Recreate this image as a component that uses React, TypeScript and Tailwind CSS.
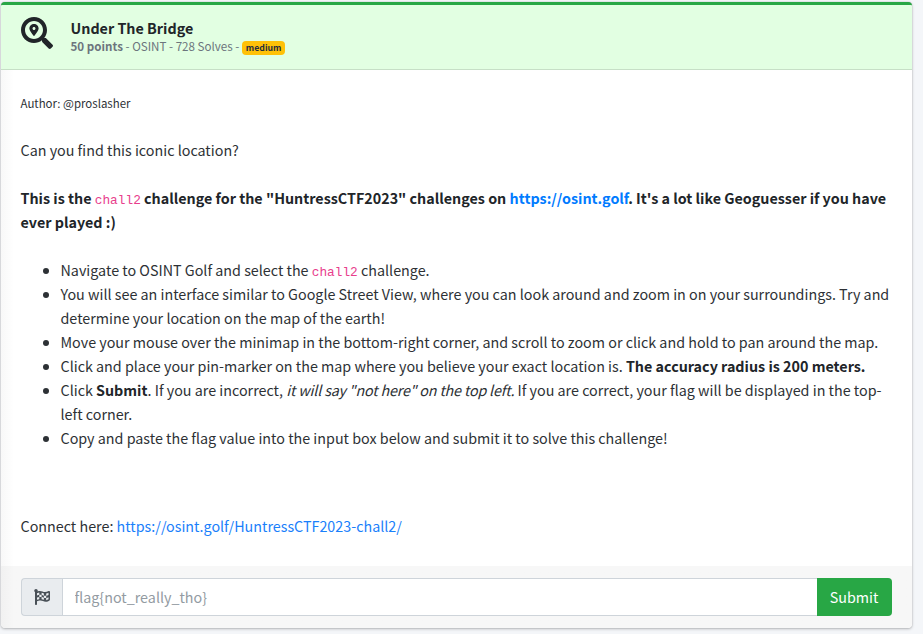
import React from "react";
import { FaSearchLocation, FaFlagCheckered } from "react-icons/fa";

function Code({ children }: { children: React.ReactNode }) {
  return (
    <code className="font-['Liberation_Mono',monospace] text-[12.8px] font-normal leading-none text-[#e83e8c]">
      {children}
    </code>
  );
}

function Line({ children }: { children: React.ReactNode }) {
  return <span className="block whitespace-nowrap">{children}</span>;
}

export default function App() {
  return (
    <div className="h-[634px] w-[923px] overflow-hidden bg-[#f4f6f9] pt-[2px] pl-px font-['Noto_Sans_CJK_SC','Source_Sans_Pro',sans-serif] text-[14.32px] leading-6 text-[#212529]">
      <div className="flex h-[626px] w-[911px] flex-col overflow-hidden rounded border-t-[3px] border-[#28a745] bg-white shadow-[0_0_1px_rgba(0,0,0,0.35),0_1px_3px_rgba(0,0,0,0.25)]">
        <header className="flex h-[65px] shrink-0 border-b border-[#c6dfc6] bg-[#e2ffe2] pl-[19.5px]">
          <FaSearchLocation className="mt-3 size-8 shrink-0" />
          <div className="ml-[18px] pt-[13px]">
            <h3 className="text-[14.32px] leading-5 font-bold">Under The Bridge</h3>
            <div className="flex h-4 items-center text-[11.6px] leading-4 whitespace-pre text-[#6c757d]">
              <b>50 points</b>
              <span> - OSINT - 728 Solves - </span>
              <span className="mt-[3px] flex h-[14px] items-center rounded bg-[#ffc107] px-1 text-[8.7px] font-bold text-[#1f2d3d]">
                medium
              </span>
            </div>
          </div>
        </header>
        <main className="h-[496px] shrink-0 bg-linear-to-r from-[#f8f8f8] to-white to-[13px] pr-5 pl-[19.5px] pt-[21px] text-[#2d3135]">
          <p className="text-[11.46px]">Author: @proslasher</p>
          <p className="mt-[23px]">Can you find this iconic location?</p>
          <p className="mt-6 font-bold text-[#212529]">
            <Line>
              This is the <Code>chall2</Code> challenge for the "HuntressCTF2023" challenges on{" "}
              <a className="text-[#007bff]">https://osint.golf</a>. It's a lot like Geoguesser if you have
            </Line>
            <Line>ever played :)</Line>
          </p>
          <ul className="mt-6 list-disc pl-10">
            <li>
              <Line>Navigate to OSINT Golf and select the <Code>chall2</Code> challenge.</Line>
            </li>
            <li>
              <Line>You will see an interface similar to Google Street View, where you can look around and zoom in on your surroundings. Try and</Line>
              <Line>determine your location on the map of the earth!</Line>
            </li>
            <li>
              <Line>Move your mouse over the minimap in the bottom-right corner, and scroll to zoom or click and hold to pan around the map.</Line>
            </li>
            <li>
              <Line>Click and place your pin-marker on the map where you believe your exact location is. <b className="text-[#212529]">The accuracy radius is 200 meters.</b></Line>
            </li>
            <li>
              <Line>Click <b className="text-[#212529]">Submit</b>. If you are incorrect, <em className="tracking-[-0.18px]">it will say "not here" on the top left.</em> If you are correct, your flag will be displayed in the top-</Line>
              <Line>left corner.</Line>
            </li>
            <li>
              <Line>Copy and paste the flag value into the input box below and submit it to solve this challenge!</Line>
            </li>
          </ul>
          <p className="mt-16">
            Connect here: <a className="text-[#1a80fb]">https://osint.golf/HuntressCTF2023-chall2/</a>
          </p>
        </main>
        <footer className="h-[62px] shrink-0 bg-linear-to-r from-[#f1f1f1] to-[#f7f7f7] to-[13px] px-5 pt-3">
          <div className="flex h-[38px]">
            <div className="flex w-[41px] items-center justify-center rounded-l border border-r-0 border-[#ced4da] bg-[#e9ecef] text-[#495057]">
              <FaFlagCheckered className="size-4" />
            </div>
            <input
              className="min-w-0 flex-1 border border-r-0 border-[#ced4da] bg-white px-[11.5px] outline-none placeholder:text-[#939ba2]"
              placeholder="flag{not_really_tho}"
            />
            <button className="w-[75px] rounded-r bg-[#28a745] pr-px text-white">Submit</button>
          </div>
        </footer>
      </div>
    </div>
  );
}
